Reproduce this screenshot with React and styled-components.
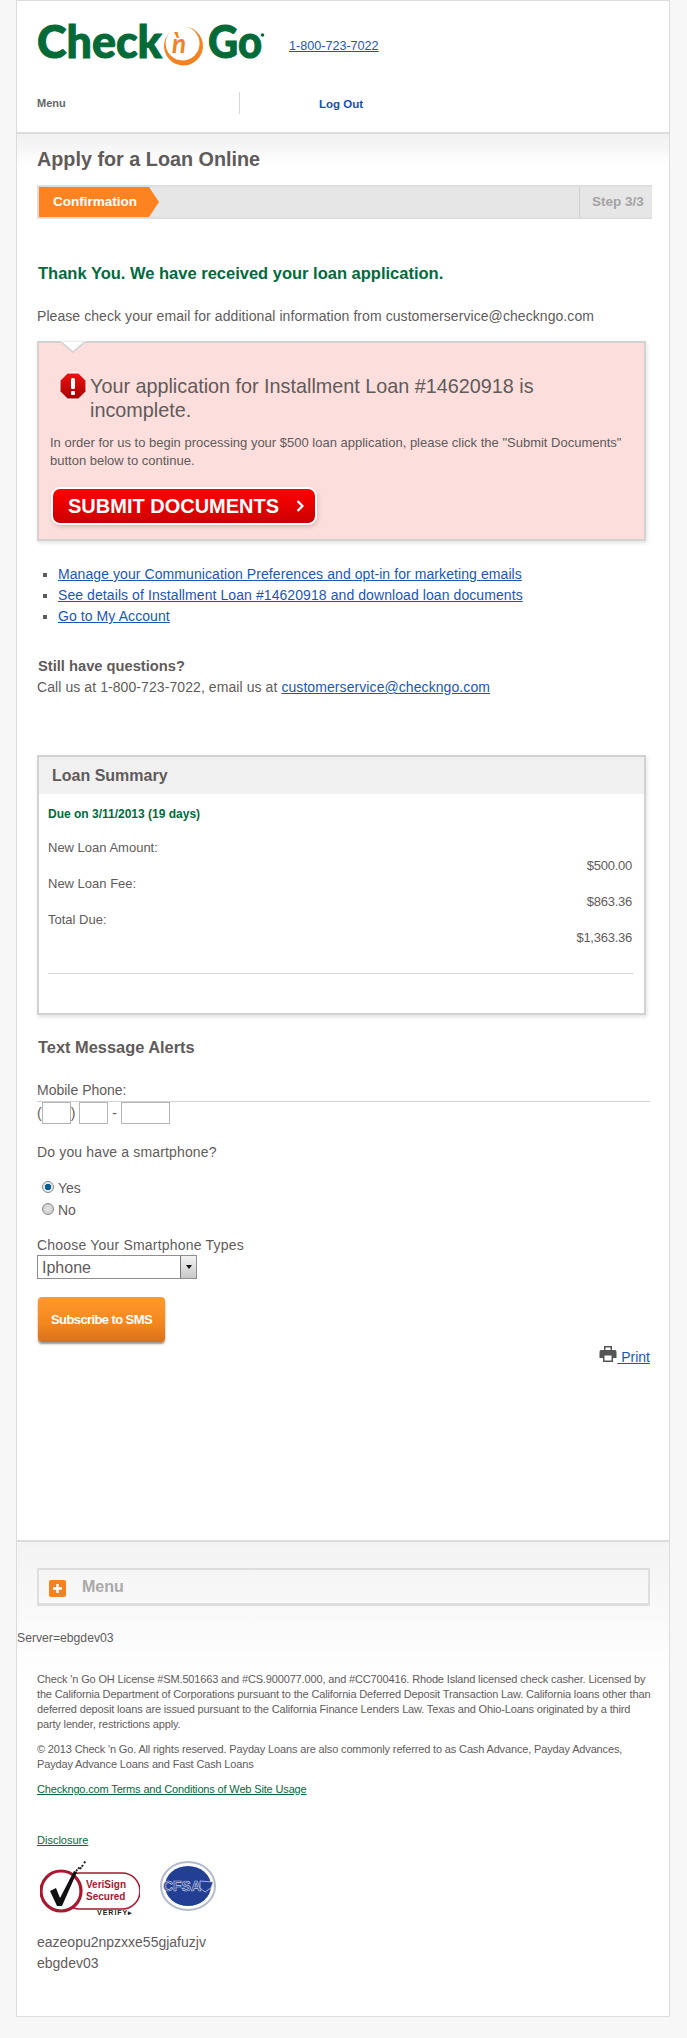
import React from "react";
import styled, { createGlobalStyle } from "styled-components";

const Global = createGlobalStyle`
  html, body { margin: 0; padding: 0; background: #f7f7f7; }
  body { font-family: "Liberation Sans", Arial, sans-serif; color: #5f5b5b; font-size: 14px; }
  * { box-sizing: border-box; }
`;
const Shell = styled.div`
  width: 654px; margin-left: 16px; height: 2017px; background: #fff;
  border: 1px solid #dcdcdc; display: flex; flex-direction: column;
`;
const Header = styled.header`
  height: 133px; border-bottom: 2px solid #dcdcdc; padding: 24px 0 0 20px; flex: none;
`;
const LogoRow = styled.div`display: flex; align-items: center; height: 41px; gap: 25px;`;
const Logo = styled.svg`width: 227px; height: 41px; display: block; overflow: visible;`;
const PhoneLink = styled.a`font-size: 12.6px; color: #1a56b8; text-decoration: underline;`;
const NavRow = styled.nav`display: flex; margin-top: 26px; height: 22px;`;
const NavMenu = styled.div`
  width: 203px; border-right: 1px solid #d8d8d8; font-size: 11px; font-weight: bold; color: #666; padding-top: 5px;
`;
const NavLogout = styled.a`font-size: 11.5px; font-weight: bold; color: #1450b4; padding: 6px 0 0 79px;`;
const Main = styled.main`
  padding: 0 19px 0 20px; flex: none;
  background: linear-gradient(#f0f0f0, #ffffff 32px) no-repeat;
`;
const Title = styled.h1`
  margin: 12px 0 0; font-size: 19.8px; line-height: 26px; font-weight: bold; color: #5f5b5b;
`;
const Progress = styled.div`
  margin: 13px -2px 0 0; height: 34px; border: 2px solid #dedede; border-right: 0; display: flex; background: #e6e6e6;
`;
const StepLabel = styled.div`
  width: 120px; background: #fd8321; color: #fff; font-weight: bold; font-size: 13.5px; line-height: 30px; padding-left: 14px;
  clip-path: polygon(0 0, 110px 0, 120px 50%, 110px 100%, 0 100%);
`;
const StepCount = styled.div`
  margin-left: auto; width: 73px; border-left: 1px solid #cfcfcf; color: #a3a3a3; font-weight: bold;
  font-size: 13.5px; line-height: 30px; padding-left: 12px;
`;
const Thanks = styled.h2`
  margin: 44px 0 0 1px; font-size: 16.5px; line-height: 20px; font-weight: bold; color: #006b3c;
`;
const BodyText = styled.p`margin: 23px 0 0; font-size: 14px; line-height: 20px; letter-spacing: .07px;`;
const Alert = styled.section`
  position: relative; margin-top: 15px; width: 609px; height: 200px; background: #fcdedc;
  border: 2px solid #d2d2d2; box-shadow: 1px 2px 4px rgba(0,0,0,.12); padding: 31px 12px 0 11px;
`;
const Notch = styled.svg`position: absolute; left: 21px; top: -2px; width: 26px; height: 12px;`;
const AlertHead = styled.div`display: flex; align-items: flex-start;`;
const AlertIcon = styled.svg`width: 28px; height: 28px; flex: none; margin: -2px 3px 0 9px;`;
const AlertTitle = styled.div`font-size: 19.8px; line-height: 24px; width: 460px;`;
const AlertText = styled.p`margin: 12px 0 0; font-size: 13px; line-height: 18px;`;
const SubmitButton = styled.button`
  display: flex; align-items: center; margin: 17px 0 0 1px; width: 266px; height: 38px; padding: 0 0 0 15px;
  border: 2px solid #fff; border-radius: 9px; background: linear-gradient(#ff0000, #cc0000);
  color: #fff; font: bold 20px "Liberation Sans", Arial, sans-serif; box-shadow: 1px 2px 4px rgba(0,0,0,.15);
`;
const Chevron = styled.svg`width: 8px; height: 14px; margin-left: 17px;`;
const LinkList = styled.ul`
  margin: 23px 0 0; padding: 0 0 0 21px; list-style: square; font-size: 14px; line-height: 21px; letter-spacing: .08px;
`;
const BlueLink = styled.a`color: #1a56b8; text-decoration: underline;`;
const Questions = styled.div`margin: 29px 0 0; line-height: 21px; font-size: 14px; letter-spacing: .08px;`;
const QuestionsHead = styled.div`font-weight: bold; margin-left: 1px; font-size: 14.7px; letter-spacing: 0;`;
const Card = styled.section`
  margin-top: 57px; width: 609px; height: 260px; border: 2px solid #d2d2d2; box-shadow: 1px 2px 4px rgba(0,0,0,.12);
`;
const CardHead = styled.h3`
  margin: 0; height: 37px; background: #f0f0f0; padding-left: 13px; font-size: 16px; line-height: 38px; font-weight: bold;
`;
const CardBody = styled.div`padding: 0 11px 0 9px;`;
const Due = styled.div`margin-top: 11px; font-size: 12px; line-height: 18px; font-weight: bold; color: #006b3c;`;
const SummaryRows = styled.div`margin-top: 16px; font-size: 13px; line-height: 18px;`;
const Amount = styled.div`text-align: right; padding-right: 1px; letter-spacing: -.25px;`;
const Rule = styled.hr`margin: 26px 0 0; border: 0; border-top: 1px solid #d6d6d6;`;
const SectionHead = styled.h3`margin: 22px 0 0 1px; font-size: 16.4px; line-height: 20px; font-weight: bold;`;
const PhoneLabel = styled.div`
  margin-top: 23px; padding-bottom: 1px; border-bottom: 1px solid #d2d2d2; font-size: 14px; line-height: 20px;
`;
const PhoneRow = styled.div`display: flex; align-items: center; height: 22px; font-size: 14px;`;
const PhoneInput = styled.input`
  width: ${(p) => p.$w}px; height: 22px; border: 1px solid #b5b5b5; background: #fff; padding: 0; margin: 0 ${(p) => p.$mr || 0}px 0 ${(p) => p.$ml || 0}px;
`;
const Question = styled.div`margin-top: 18px; line-height: 20px; letter-spacing: .15px;`;
const RadioGroup = styled.div`margin-top: 15px; padding-left: 5px;`;
const RadioRow = styled.label`display: flex; align-items: center; height: 22px; gap: 4px;`;
const Radio = styled.input`
  appearance: none; margin: 0 0 2px; width: 12px; height: 12px; border-radius: 50%; border: 1px solid #8a8a8a;
  background: ${(p) => (p.$on
    ? "radial-gradient(circle, #0b5f99 0 3px, #e8e8e8 3.5px)"
    : "radial-gradient(circle, #e4e4e4, #c8c8c8)")};
`;
const SelectLabel = styled.div`margin-top: 14px; line-height: 20px; letter-spacing: .2px;`;
const SelectWrap = styled.div`position: relative; margin-top: 0; width: 160px; height: 24px;`;
const Select = styled.select`
  appearance: none; width: 100%; height: 100%; border: 1px solid #8f8f8f; border-radius: 0; background: #fff; padding: 0 0 0 4px;
  font: 16px "Liberation Sans", Arial, sans-serif; color: #5f5b5b;
`;
const SelectArrow = styled.span`
  position: absolute; right: 1px; top: 1px; bottom: 1px; width: 16px; border-left: 1px solid #777;
  background: linear-gradient(#f4f4f4, #c8c8c8); display: flex; align-items: center; justify-content: center;
  &::after { content: ""; border: 3.5px solid transparent; border-top: 4px solid #111; border-bottom: 0; }
`;
const SmsButton = styled.button`
  display: block; margin-top: 18px; margin-left: 1px; width: 127px; height: 45px; border: 0; border-radius: 4px;
  background: linear-gradient(#ff9a2b, #f3861f 60%, #d9701a); color: #fff; font: bold 13px "Liberation Sans", Arial, sans-serif; letter-spacing: -.6px;
  box-shadow: 0 2px 2px rgba(90,60,20,.55);
`;
const PrintRow = styled.div`display: flex; justify-content: flex-end; align-items: center; margin-top: 5px; height: 20px;`;
const PrintIcon = styled.svg`width: 18px; height: 18px; margin-top: -6px;`;
const Footer = styled.footer`
  margin-top: 173px; flex: 1; border-top: 2px solid #dcdcdc; padding-bottom: 30px;
  background: linear-gradient(#f3f3f3, #ffffff 140px) no-repeat;
`;
const FooterMenu = styled.div`
  margin: 26px 19px 0 20px; height: 38px; border: 2px solid #dedede; border-bottom-width: 3px; display: flex; align-items: center; padding: 1px 0 0 10px;
  font-size: 16px; font-weight: bold; color: #a9a9a9; gap: 16px;
`;
const PlusIcon = styled.svg`width: 17px; height: 17px; margin-top: 3px;`;
const Server = styled.div`margin-top: 22px; line-height: 20px; font-size: 12.2px;`;
const Legal = styled.div`margin: 24px 16px 0 20px; font-size: 11px; line-height: 15px; letter-spacing: -.15px;`;
const LegalP = styled.p`margin: 0 0 10px;`;
const GreenLink = styled.a`color: #006b3c; text-decoration: underline;`;
const Disclosure = styled.div`margin: 36px 0 0 20px; font-size: 11px; line-height: 15px;`;
const Badges = styled.div`display: flex; margin: 13px 0 0 23px; gap: 20px; height: 56px;`;
const Badge = styled.svg`display: block;`;
const Tokens = styled.div`margin: 15px 0 0 20px; font-size: 14px; line-height: 21px;`;

const Phrase = ({ children }) => <span>{children}</span>;

export default function App() {
  return (
    <>
      <Global />
      <Shell>
        <Header>
          <LogoRow>
            <Logo viewBox="0 0 227 41" aria-label="Check 'n Go logo">
              <text x="0" y="33" fontFamily="Lato, 'Open Sans', sans-serif" fontWeight="900" fontSize="45" fill="#046a38" textLength="125" lengthAdjust="spacingAndGlyphs" stroke="#046a38" strokeWidth="1">Check</text>
              <path d="M134 6 A19.5 19.5 0 1 0 147 1.5 A17 17 0 1 1 134 6Z" fill="#f58220" />
              <text x="135" y="28" fontFamily="Lato, 'Open Sans', sans-serif" fontStyle="italic" fontWeight="700" fontSize="26" fill="#f58220">n</text>
              <path d="M137 7 L140.5 7 L142 13 L140 13Z" fill="#f58220" />
              <text x="171" y="33" fontFamily="Lato, 'Open Sans', sans-serif" fontWeight="900" fontSize="45" fill="#046a38" textLength="54" lengthAdjust="spacingAndGlyphs" stroke="#046a38" strokeWidth="1">Go</text>
              <circle cx="225.5" cy="10" r="1.8" fill="#046a38" />
            </Logo>
            <PhoneLink href="#">1-800-723-7022</PhoneLink>
          </LogoRow>
          <NavRow>
            <NavMenu>Menu</NavMenu>
            <NavLogout>Log Out</NavLogout>
          </NavRow>
        </Header>
        <Main>
          <Title>Apply for a Loan Online</Title>
          <Progress>
            <StepLabel>Confirmation</StepLabel>
            <StepCount>Step 3/3</StepCount>
          </Progress>
          <Thanks>Thank You. We have received your loan application.</Thanks>
          <BodyText>Please check your email for additional information from customerservice@checkngo.com</BodyText>
          <Alert>
            <Notch viewBox="0 0 26 12">
              <path d="M0 0 L13 11 L26 0Z" fill="#fff" stroke="#d2d2d2" strokeWidth="1.5" />
              <path d="M0 -1 H26 V0.5 H0Z" fill="#fff" />
            </Notch>
            <AlertHead>
              <AlertIcon viewBox="0 0 28 28">
                <defs>
                  <linearGradient id="stopFill" x1="0" y1="0" x2="0" y2="1">
                    <stop offset="0" stopColor="#ee1111" />
                    <stop offset="1" stopColor="#a80000" />
                  </linearGradient>
                </defs>
                <path d="M8.5 1 H19.5 L27 8.5 V19.5 L19.5 27 H8.5 L1 19.5 V8.5Z" fill="url(#stopFill)" stroke="#fff" strokeWidth="1" />
                <rect x="12" y="6" width="4" height="11" rx="1.5" fill="#fff" />
                <rect x="12" y="19" width="4" height="4" rx="1" fill="#fff" />
              </AlertIcon>
              <AlertTitle>Your application for Installment Loan #14620918 is incomplete.</AlertTitle>
            </AlertHead>
            <AlertText>In order for us to begin processing your $500 loan application, please click the "Submit Documents" button below to continue.</AlertText>
            <SubmitButton>
              SUBMIT DOCUMENTS
              <Chevron viewBox="0 0 8 14"><path d="M1.5 2 L6.5 7 L1.5 12" fill="none" stroke="#fff" strokeWidth="2.2" /></Chevron>
            </SubmitButton>
          </Alert>
          <LinkList>
            <li><BlueLink href="#">Manage your Communication Preferences and opt-in for marketing emails</BlueLink></li>
            <li><BlueLink href="#">See details of Installment Loan #14620918 and download loan documents</BlueLink></li>
            <li><BlueLink href="#">Go to My Account</BlueLink></li>
          </LinkList>
          <Questions>
            <QuestionsHead>Still have questions?</QuestionsHead>
            <div>Call us at 1-800-723-7022, email us at <BlueLink href="#">customerservice@checkngo.com</BlueLink></div>
          </Questions>
          <Card>
            <CardHead>Loan Summary</CardHead>
            <CardBody>
              <Due>Due on 3/11/2013 (19 days)</Due>
              <SummaryRows>
                <div>New Loan Amount:</div>
                <Amount>$500.00</Amount>
                <div>New Loan Fee:</div>
                <Amount>$863.36</Amount>
                <div>Total Due:</div>
                <Amount>$1,363.36</Amount>
              </SummaryRows>
              <Rule />
            </CardBody>
          </Card>
          <SectionHead>Text Message Alerts</SectionHead>
          <PhoneLabel>Mobile Phone:</PhoneLabel>
          <PhoneRow>
            <Phrase>(</Phrase>
            <PhoneInput $w={29} readOnly />
            <Phrase>)</Phrase>
            <PhoneInput $w={29} $ml={4} $mr={4} readOnly />
            <Phrase>-</Phrase>
            <PhoneInput $w={49} $ml={4} readOnly />
          </PhoneRow>
          <Question>Do you have a smartphone?</Question>
          <RadioGroup>
            <RadioRow><Radio type="radio" name="smart" $on defaultChecked />Yes</RadioRow>
            <RadioRow><Radio type="radio" name="smart" />No</RadioRow>
          </RadioGroup>
          <SelectLabel>Choose Your Smartphone Types</SelectLabel>
          <SelectWrap>
            <Select defaultValue="Iphone"><option>Iphone</option></Select>
            <SelectArrow />
          </SelectWrap>
          <SmsButton>Subscribe to SMS</SmsButton>
          <PrintRow>
            <PrintIcon viewBox="0 0 18 18">
              <path d="M5 1 H13 V5 H16 Q17.5 5 17.5 7 V13 H14 V17 H4 V13 H.5 V7 Q.5 5 2 5 H5Z M6.5 2.5 V5 H11.5 V2.5Z M5.5 10.5 V15.5 H12.5 V10.5Z" fill="#555" fillRule="evenodd" />
            </PrintIcon>
            <BlueLink href="#">&nbsp;Print</BlueLink>
          </PrintRow>
        </Main>
        <Footer>
          <FooterMenu>
            <PlusIcon viewBox="0 0 17 17">
              <rect width="17" height="17" rx="2" fill="#f58220" />
              <path d="M8.5 4 V13 M4 8.5 H13" stroke="#fff" strokeWidth="2.4" />
            </PlusIcon>
            Menu
          </FooterMenu>
          <Server>Server=ebgdev03</Server>
          <Legal>
            <LegalP>Check 'n Go OH License #SM.501663 and #CS.900077.000, and #CC700416. Rhode Island licensed check casher. Licensed by the California Department of Corporations pursuant to the California Deferred Deposit Transaction Law. California loans other than deferred deposit loans are issued pursuant to the California Finance Lenders Law. Texas and Ohio-Loans originated by a third party lender, restrictions apply.</LegalP>
            <LegalP>© 2013 Check 'n Go. All rights reserved. Payday Loans are also commonly referred to as Cash Advance, Payday Advances, Payday Advance Loans and Fast Cash Loans</LegalP>
            <LegalP as="div"><GreenLink href="#">Checkngo.com Terms and Conditions of Web Site Usage</GreenLink></LegalP>
          </Legal>
          <Disclosure><GreenLink href="#">Disclosure</GreenLink></Disclosure>
          <Badges>
            <Badge width="100" height="56" viewBox="0 0 100 56" aria-label="VeriSign Secured">
              <rect x="22" y="12" width="78" height="36" rx="18" fill="#fff" stroke="#a6192e" strokeWidth="1.6" />
              <circle cx="21" cy="30" r="20" fill="#fff" stroke="#a6192e" strokeWidth="3.2" />
              <path d="M10 30 L16 27 L20 37 L34 10 L37 11 L22 45 L17 45Z" fill="#111" />
              <path d="M36 10 L40 6 M40 8 L43 4 M44 2 L46 0" stroke="#222" strokeWidth="2" strokeDasharray="2 1" />
              <text x="46" y="27" fontFamily="Liberation Sans, sans-serif" fontWeight="bold" fontSize="10" fill="#a6192e">VeriSign</text>
              <text x="46" y="39" fontFamily="Liberation Sans, sans-serif" fontWeight="bold" fontSize="10" fill="#a6192e">Secured</text>
              <text x="57" y="54" fontFamily="Liberation Sans, sans-serif" fontWeight="bold" fontSize="7" letterSpacing="1" fill="#222">VERIFY▸</text>
            </Badge>
            <Badge width="56" height="50" viewBox="0 0 56 50" aria-label="CFSA">
              <ellipse cx="28" cy="25" rx="27" ry="24" fill="#fff" stroke="#b4bccc" strokeWidth="2" />
              <ellipse cx="28" cy="25" rx="23" ry="20" fill="#233f94" />
              <text x="3" y="30" fontFamily="Liberation Sans, sans-serif" fontWeight="bold" fontSize="15" textLength="38" lengthAdjust="spacingAndGlyphs" fill="#233f94" stroke="#c8d0e4" strokeWidth=".7">CFSA</text>
              <path d="M40 20 L53 21 L51 27 L45 31 L40 27Z" fill="#233f94" stroke="#c8d0e4" strokeWidth=".8" />
            </Badge>
          </Badges>
          <Tokens>
            <div>eazeopu2npzxxe55gjafuzjv</div>
            <div>ebgdev03</div>
          </Tokens>
        </Footer>
      </Shell>
    </>
  );
}
